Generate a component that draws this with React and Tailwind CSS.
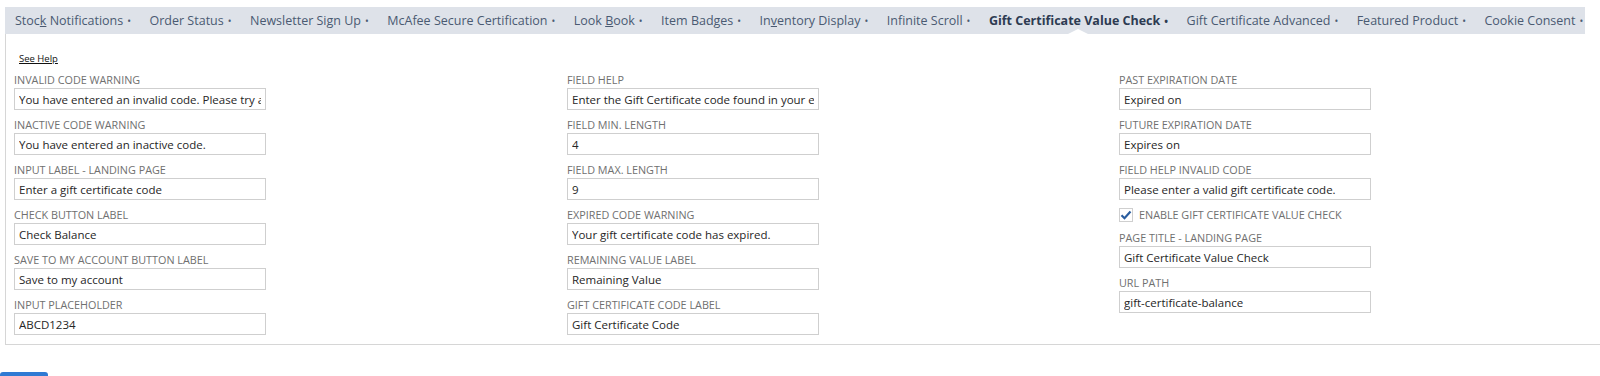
import React from 'react';

const tabs = [
  { pre: 'Stoc', key: 'k', post: ' Notifications' },
  { pre: 'Order Status' },
  { pre: 'Newsletter Sign Up' },
  { pre: 'McAfee Secure Certification' },
  { pre: 'Look ', key: 'B', post: 'ook' },
  { pre: 'Item Badges' },
  { pre: 'In', key: 'v', post: 'entory Display' },
  { pre: 'Infinite Scroll' },
  { pre: 'Gift Certificate Value Check', active: true },
  { pre: 'Gift Certificate Advanced' },
  { pre: 'Featured Product' },
  { pre: 'Cookie Consent' },
];

const col1 = [
  ['Invalid Code Warning', 'You have entered an invalid code. Please try again.'],
  ['Inactive Code Warning', 'You have entered an inactive code.'],
  ['Input Label - Landing Page', 'Enter a gift certificate code'],
  ['Check Button Label', 'Check Balance'],
  ['Save to my Account Button Label', 'Save to my account'],
  ['Input Placeholder', 'ABCD1234'],
];

const col2 = [
  ['Field Help', 'Enter the Gift Certificate code found in your email.'],
  ['Field Min. Length', '4'],
  ['Field Max. Length', '9'],
  ['Expired Code Warning', 'Your gift certificate code has expired.'],
  ['Remaining Value Label', 'Remaining Value'],
  ['Gift Certificate Code Label', 'Gift Certificate Code'],
];

const Field = ({ label, value }) => (
  <div className="mb-[7px]">
    <div className="h-[16px] text-[10.8px] leading-[16px] uppercase text-[#707070]">{label}</div>
    <input
      readOnly
      value={value}
      className="block w-[252px] h-[22px] border border-[#cfcfcf] px-[4px] text-[11.5px] text-[#262626] bg-white outline-none"
    />
  </div>
);

const App = () => {
  return (
    <div className="w-[1600px] h-[376px] overflow-hidden bg-white pt-[7px] relative" style={{ fontFamily: '"Open Sans", "Liberation Sans", sans-serif' }}>
      {/* Subtab bar */}
      <div className="ml-[5px] w-[1580px] h-[27px] bg-[#dee2e9] flex items-center pl-[1px]">
        {tabs.map((t, i) => (
          <div
            key={i}
            className={`relative h-full flex items-center pt-[2px] pl-[9px] pr-[9.5px] text-[12.5px] whitespace-nowrap ${
              t.active ? 'font-bold text-[#2d3b52]' : 'text-[#4a5a72]'
            }`}
          >
            <span>
              {t.pre}
              {t.key && <span className="underline">{t.key}</span>}
              {t.post}
            </span>
            <span className="ml-[4px] text-[10px]">•</span>
            {t.active && (
              <span className="absolute bottom-0 left-[88px] w-0 h-0 border-l-[10px] border-r-[10px] border-b-[5px] border-l-transparent border-r-transparent border-b-white" />
            )}
          </div>
        ))}
      </div>

      {/* Panel */}
      <div className="ml-[5px] w-[1620px] h-[311px] border-l border-b border-[#d6d6d6] pl-[8px]">
        <div className="pt-[10px] pl-[5px] h-[38px]">
          <a className="text-[9.5px] underline text-[#111]">See Help</a>
        </div>
        <div className="grid grid-cols-[553px_552px_300px]">
          <div>
            {col1.map(([l, v]) => (
              <Field key={l} label={l} value={v} />
            ))}
          </div>
          <div>
            {col2.map(([l, v]) => (
              <Field key={l} label={l} value={v} />
            ))}
          </div>
          <div>
            <Field label="Past Expiration Date" value="Expired on" />
            <Field label="Future Expiration Date" value="Expires on" />
            <Field label="Field Help Invalid Code" value="Please enter a valid gift certificate code." />
            <div className="h-[16px] mb-[7px] flex items-center">
              <span className="w-[14px] h-[14px] border border-[#cfcfcf] bg-white flex items-center justify-center">
                <svg width="12" height="10" viewBox="0 0 12 10">
                  <path d="M1.5 5.2 L4.5 8.2 L10.5 1.5" fill="none" stroke="#2a5d9f" strokeWidth="2.2" />
                </svg>
              </span>
              <span className="ml-[6px] text-[10.8px] uppercase text-[#707070]">Enable Gift Certificate Value Check</span>
            </div>
            <Field label="Page Title - Landing Page" value="Gift Certificate Value Check" />
            <Field label="URL Path" value="gift-certificate-balance" />
          </div>
        </div>
      </div>

      {/* Button peeking at bottom */}
      <div className="mt-[27px] w-[48px] h-[20px] bg-[#2f7ad3] rounded-[3px]" />
    </div>
  );
};

export default App;
